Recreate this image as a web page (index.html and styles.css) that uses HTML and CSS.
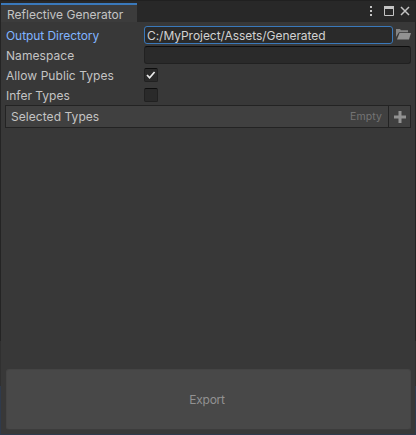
FILE: index.html
```html
<!DOCTYPE html>
<html lang="en">
<head>
<meta charset="utf-8">
<title>Reflective Generator</title>
<link rel="stylesheet" href="styles.css">
</head>
<body>
<main class="window">
  <header class="tabbar">
    <div class="tab"><span class="t-title">Reflective Generator</span></div>
    <div class="controls">
      <svg class="dots" width="4" height="12" viewBox="0 0 4 12" fill="#c4c4c4"><rect x="1" y="0" width="2" height="2"/><rect x="1" y="4" width="2" height="2"/><rect x="1" y="8" width="2" height="2"/></svg>
      <svg class="max" width="10" height="10" viewBox="0 0 10 10"><path d="M.5 1.5h9v8h-9z" fill="none" stroke="#c4c4c4"/><path d="M0 0h10v3H0z" fill="#c4c4c4"/></svg>
      <svg class="close" width="10" height="10" viewBox="0 0 10 10"><path d="M1 1l8 8M9 1l-8 8" stroke="#c4c4c4" stroke-width="1.5"/></svg>
    </div>
  </header>
  <section class="form">
    <div class="row">
      <span class="label active"><span class="t-output">Output Directory</span></span>
      <div class="field focused"><span class="t-path">C:/MyProject/Assets/Generated</span></div>
      <svg class="folder" width="15" height="12" viewBox="0 0 15 12"><path d="M0 8V0h4l1 1.2h7V3.200H3z" fill="#858585"/><path d="M3.500 4H15L13 10.500H1z" fill="#929292"/></svg>
    </div>
    <div class="row">
      <span class="label"><span class="t-wide">Namespace</span></span>
      <div class="field"></div>
    </div>
    <div class="row">
      <span class="label"><span class="t-wide">Allow Public Types</span></span>
      <div class="check"><svg width="12" height="12" viewBox="0 0 12 12"><path d="M2 6l2.600 2.800L9.600 3" fill="none" stroke="#ececec" stroke-width="1.700"/></svg></div>
    </div>
    <div class="row">
      <span class="label"><span>Infer Types</span></span>
      <div class="check"></div>
    </div>
  </section>
  <div class="list">
    <span class="list-title"><span class="t-wide">Selected Types</span></span>
    <span class="empty">Empty</span>
    <div class="add"><svg width="12" height="12" viewBox="0 0 12 12"><path d="M4.500 0h3v4.500H12v3H7.500V12h-3V7.500H0v-3h4.500z" fill="#929292"/></svg></div>
  </div>
  <div class="export"><span>Export</span></div>
</main>
</body>
</html>
```
FILE: styles.css
```css
* { box-sizing: border-box; }
body {
  margin: 0;
  background: #383838;
  color: #c4c4c4;
  font: 12px/20px Inter, sans-serif;
}
svg { display: block; flex: none; }
.window {
  width: 416px;
  height: 435px;
  display: flex;
  flex-direction: column;
  overflow: hidden;
  white-space: nowrap;
  border: solid #282828;
  border-width: 0 1px;
  border-image: linear-gradient(#242424 0 340px, #303030 340px 385px, #2f3a4b 385px) 1;
  box-shadow: inset 0 -1px #2f3a4b;
}
.tabbar {
  height: 22px;
  display: flex;
  justify-content: space-between;
  background: #282828;
  border-top: 1px solid #202020;
}
.tab {
  width: 136px;
  margin-top: 2px;
  padding-left: 6px;
  border-top: 2px solid #3a79bb;
  background: #3c3c3c;
  line-height: 19px;
}
.controls { display: flex; padding: 5px 5px 0 0; }
.dots { margin-right: 11px; }
.max { margin-right: 6px; }
.form { padding: 4px 4px 0 5px; }
.row { display: flex; height: 20px; }
.label { width: 138px; line-height: 20px; }
.active { color: #81b4ff; }
.t-output { letter-spacing: -0.06px; }
.t-path { letter-spacing: -0.05px; }
.t-wide { letter-spacing: 0.06px; }
.field {
  flex: 1;
  height: 18px;
  border: 1px solid #212121;
  border-top-color: #0d0d0d;
  border-radius: 3px;
  background: #2a2a2a;
  padding-left: 2px;
  line-height: 17px;
  color: #d2d2d2;
}
.focused { border-color: #3a79bb; }
.folder { margin: 3px 0 0 3px; }
.check {
  width: 14px;
  height: 14px;
  margin-top: 2px;
  border: 1px solid #212121;
  border-top-color: #0d0d0d;
  border-radius: 2px;
  background: #2a2a2a;
}
.list {
  height: 23px;
  margin: -1px 4px 0;
  border: 1px solid #232323;
  background: #404040;
  display: flex;
  line-height: 22px;
}
.list-title { flex: 1; padding-left: 5px; }
.empty { color: #747474; font-size: 10.5px; letter-spacing: 0.1px; margin-right: 6px; }
.add {
  width: 22px;
  border-left: 1px solid #232323;
  display: flex;
  align-items: center;
  justify-content: center;
}
.export {
  height: 61px;
  margin: auto 4px 5px 5px;
  padding: 1px 3px 0 0;
  border-radius: 3px;
  background: #484848;
  border: 1px solid #444;
  border-bottom-color: #3c3c3c;
  color: #929292;
  letter-spacing: -0.25px;
  display: flex;
  align-items: center;
  justify-content: center;
}
```
